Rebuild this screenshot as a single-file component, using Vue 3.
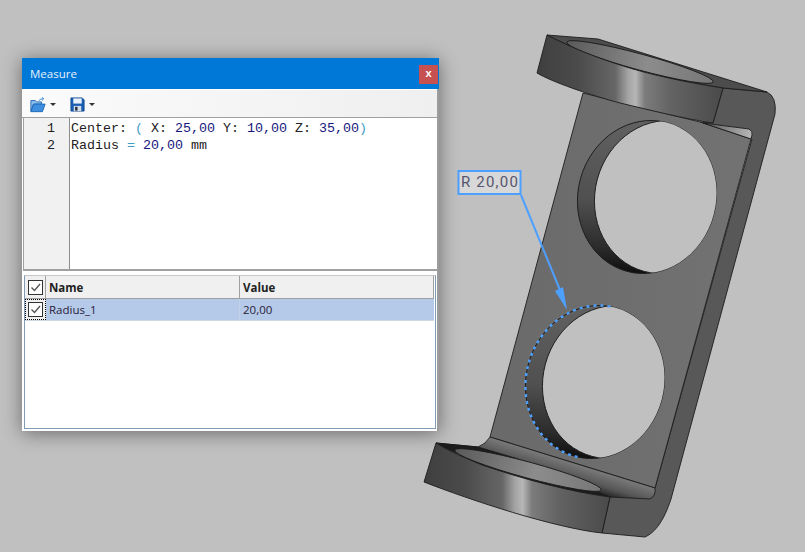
<script setup>
const codeLines = [
  [['Center:', 'plain'], [' ', 'plain'], ['(', 'op'], [' X: ', 'plain'], ['25,00', 'num'], [' Y: ', 'plain'], ['10,00', 'num'], [' Z: ', 'plain'], ['35,00', 'num'], [')', 'op']],
  [['Radius', 'plain'], [' ', 'plain'], ['=', 'op'], [' ', 'plain'], ['20,00', 'num'], [' mm', 'plain']]
]

const measures = [{ name: 'Radius_1', value: '20,00' }]

// the two holes are the same shape, moved along the plate
const holes = [
  { id: 'upper', dx: 52, dy: -185 },
  { id: 'lower', dx: 0, dy: 0 }
]
</script>

<template>
  <div class="desktop">
    <svg class="scene" width="805" height="552" viewBox="0 0 805 552">
      <defs>
        <linearGradient id="ringSide" gradientUnits="objectBoundingBox" x1="0" y1="0" x2="1" y2="0">
          <stop offset="0" stop-color="#3f3f3f" />
          <stop offset="0.22" stop-color="#4b4b4b" />
          <stop offset="0.42" stop-color="#666" />
          <stop offset="0.49" stop-color="#a4a4a4" />
          <stop offset="0.53" stop-color="#b6b6b6" />
          <stop offset="0.58" stop-color="#7c7c7c" />
          <stop offset="0.72" stop-color="#636363" />
          <stop offset="1" stop-color="#4a4a4a" />
        </linearGradient>
        <linearGradient id="plate" gradientUnits="userSpaceOnUse" x1="500" y1="300" x2="740" y2="300">
          <stop offset="0" stop-color="#6a6a6a" />
          <stop offset="1" stop-color="#727272" />
        </linearGradient>
        <linearGradient id="band" gradientUnits="userSpaceOnUse" x1="570" y1="462" x2="561" y2="491">
          <stop offset="0" stop-color="#7a7a7a" />
          <stop offset="0.45" stop-color="#555" />
          <stop offset="0.85" stop-color="#0c0c0c" />
          <stop offset="1" stop-color="#000" />
        </linearGradient>
        <linearGradient id="wall" gradientUnits="objectBoundingBox" x1="0.3" y1="0" x2="0.5" y2="1">
          <stop offset="0" stop-color="#626262" />
          <stop offset="0.55" stop-color="#505050" />
          <stop offset="0.85" stop-color="#2c2c2c" />
          <stop offset="1" stop-color="#111" />
        </linearGradient>
        <linearGradient id="bore" gradientUnits="objectBoundingBox" x1="0" y1="0" x2="1" y2="0">
          <stop offset="0" stop-color="#5a5a5a" />
          <stop offset="0.55" stop-color="#8c8c8c" />
          <stop offset="1" stop-color="#777" />
        </linearGradient>
        <linearGradient id="wedge" gradientUnits="userSpaceOnUse" x1="705" y1="125" x2="752" y2="135">
          <stop offset="0" stop-color="#5c5c5c" />
          <stop offset="1" stop-color="#b8b8b8" />
        </linearGradient>
        <clipPath id="frontUpper"><ellipse cx="647" cy="197" rx="69" ry="77" transform="rotate(15 647 197)" /></clipPath>
        <clipPath id="frontLower"><ellipse cx="595" cy="382" rx="69" ry="77" transform="rotate(15 595 382)" /></clipPath>
        <clipPath id="leftArc"><polygon points="612,298 500,298 500,470 578,470 578,445 530,380 612,315" /></clipPath>
      </defs>

      <!-- side face with the big fillet -->
      <path class="edge" fill="#585858"
        d="M723 88 L767 92 Q777 97 775 114 L671 499 C664 520 656 532 645 537 L602 533 L610 497 L655 488 L752 139 L700 122 L713 123 Z" />

      <!-- front plate -->
      <path class="edge" fill="url(#plate)" d="M583 93 L700 122 L751 139 L655 488 L490 437 Z" />
      <path class="edge" fill="url(#wedge)" d="M703 123 L749 129 Q753 131 752 135 L751 139 Z" />

      <!-- holes -->
      <g v-for="hole in holes" :key="hole.id">
        <ellipse class="edge" fill="url(#wall)"
          :cx="595 + hole.dx" :cy="382 + hole.dy" rx="69" ry="77"
          :transform="`rotate(15 ${595 + hole.dx} ${382 + hole.dy})`" />
        <g :clip-path="hole.id === 'upper' ? 'url(#frontUpper)' : 'url(#frontLower)'">
          <ellipse class="edge" fill="#c0c0c0"
            :cx="612 + hole.dx" :cy="382 + hole.dy" rx="69" ry="77"
            :transform="`rotate(15 ${612 + hole.dx} ${382 + hole.dy})`" />
        </g>
      </g>

      <!-- selected circle -->
      <g clip-path="url(#leftArc)">
        <ellipse cx="595" cy="382" rx="69" ry="77" transform="rotate(15 595 382)"
          fill="none" stroke="#4da0ff" stroke-width="2.4" stroke-dasharray="3 4" />
      </g>

      <!-- fillet band above the lower ring -->
      <path class="edge" fill="url(#band)"
        d="M490 437 L655 488 Q656 496 650 499 L610 497 L436 443 L478 447 Q486 444 490 437 Z" />

      <!-- lower ring -->
      <path class="edge" fill="#1c1c1c"
        d="M436 443 L478 447 L515 458 L610 497 L548 487 L482 465 L445 448 Z" />
      <ellipse class="edge" cx="528" cy="470" rx="76" ry="8" transform="rotate(15.2 528 470)" fill="url(#bore)" />
      <path class="edge" fill="url(#ringSide)"
        d="M436 443 L424 482 C470 500 555 528 602 533 L610 497 C570 492 520 478 482 465 C465 458 450 452 436 443 Z" />

      <!-- upper ring -->
      <path class="edge" fill="#4c4c4c"
        d="M547 35 L598 39 L767 92 L723 88 C690 83 650 75 620 65 C595 57 570 47 547 35 Z" />
      <ellipse class="edge" cx="640" cy="62" rx="76" ry="8" transform="rotate(15.2 640 62)" fill="url(#bore)" />
      <path class="edge" fill="url(#ringSide)"
        d="M547 35 L537 73 C552 82 590 95 620 103 C650 110 685 119 713 123 L723 88 C690 83 650 75 620 65 C595 57 570 47 547 35 Z" />

      <!-- dimension leader -->
      <line x1="521" y1="195" x2="562" y2="295" stroke="#4da0ff" stroke-width="2" />
      <polygon points="567,310 555,291 563,287" fill="#4da0ff" />
      <rect x="458.5" y="171" width="62" height="23" fill="#d8d8d8" stroke="#4da0ff" stroke-width="2" />
      <text class="dim-text" x="461" y="187">R 20,00</text>
    </svg>

    <div class="window">
      <div class="titlebar">
        <span class="title">Measure</span>
        <button class="close">x</button>
      </div>

      <div class="body">
        <div class="toolbar">
          <div class="tool">
            <svg width="16" height="16" viewBox="0 0 18 18">
              <path d="M1 4 H6 L7.5 5.5 H13 V8 H4 L1 16 Z" fill="#8fc0ec" stroke="#1b63b5" stroke-width="1" />
              <path d="M4 8 H17 L14 16.5 H1 Z" fill="#3f8fdf" stroke="#1b63b5" stroke-width="1" />
              <path d="M10 4 Q12 1.5 15 2 M13.5 0.5 L15.5 2 L13.5 3.8" fill="none" stroke="#3a8ed8" stroke-width="1.1" />
            </svg>
            <span class="caret"></span>
          </div>
          <div class="tool">
            <svg width="15" height="15" viewBox="0 0 16 16">
              <path d="M1 1 H13 L15 3 V15 H1 Z" fill="#1a5fb4" stroke="#134b92" stroke-width="1" />
              <rect x="3.5" y="1.5" width="9" height="5.5" fill="#e9f1fa" />
              <rect x="4" y="9.5" width="8" height="5.5" fill="#d6dde6" />
              <rect x="5.5" y="10.5" width="2.5" height="4" fill="#1d2a3a" />
            </svg>
            <span class="caret"></span>
          </div>
        </div>

        <div class="editor">
          <div class="gutter">
            <div v-for="(line, i) in codeLines" :key="i" class="line-no">{{ i + 1 }}</div>
          </div>
          <div class="code">
            <div v-for="(line, i) in codeLines" :key="i" class="code-line">
              <span v-for="(part, j) in line" :key="j" :class="part[1]">{{ part[0] }}</span>
            </div>
          </div>
        </div>

        <div class="table">
          <div class="row head">
            <div class="cell check">
              <span class="box">
                <svg width="11" height="11" viewBox="0 0 11 11"><path d="M1.5 5.5 L4.5 8.5 L10 2" fill="none" stroke="#555" stroke-width="1.4" /></svg>
              </span>
            </div>
            <div class="cell name">Name</div>
            <div class="cell value">Value</div>
          </div>
          <div v-for="m in measures" :key="m.name" class="row selected">
            <div class="cell check focused">
              <span class="box">
                <svg width="11" height="11" viewBox="0 0 11 11"><path d="M1.5 5.5 L4.5 8.5 L10 2" fill="none" stroke="#555" stroke-width="1.4" /></svg>
              </span>
            </div>
            <div class="cell name">{{ m.name }}</div>
            <div class="cell value">{{ m.value }}</div>
          </div>
        </div>
      </div>
    </div>
  </div>
</template>

<style scoped>
.desktop {
  position: relative;
  width: 805px;
  height: 552px;
  background: #c0c0c0;
  overflow: hidden;
  font-family: "Open Sans", "Liberation Sans", sans-serif;
}

.scene {
  position: absolute;
  left: 0;
  top: 0;
}

.edge {
  stroke: #1d1d1d;
  stroke-width: 0.9;
  stroke-linejoin: round;
}

.dim-text {
  font-family: Roboto, sans-serif;
  font-size: 15px;
  font-weight: 400;
  letter-spacing: 1.2px;
  fill: #55556e;
}

/* floating tool window */
.window {
  position: absolute;
  left: 22px;
  top: 58px;
  width: 417px;
  height: 373px;
  box-sizing: border-box;
  display: flex;
  flex-direction: column;
  background: #9c9c9c;
  box-shadow: 0 2px 18px rgba(0, 0, 0, 0.45);
}

.titlebar {
  height: 31px;
  flex: none;
  display: flex;
  align-items: center;
  justify-content: space-between;
  padding: 0 1px 0 8px;
  background: #0078d7;
}

.title {
  color: #e8f2fb;
  font-size: 11.5px;
  margin-top: -1px;
}

.close {
  width: 19px;
  height: 19px;
  margin-top: 1px;
  padding: 0;
  border: none;
  background: #c75050;
  color: #fff;
  font: bold 11px "Liberation Mono", monospace;
}

.body {
  flex: 1;
  min-height: 0;
  margin-right: 2px;
  display: flex;
  flex-direction: column;
  background: #fff;
}

.toolbar {
  height: 28px;
  flex: none;
  margin-top: 1px;
  display: flex;
  align-items: center;
  gap: 14px;
  padding: 2px 0 0 8px;
  background: linear-gradient(90deg, #fbfbfb, #efefef);
  border-bottom: 1px solid #a0a0a0;
  box-sizing: border-box;
}

.tool {
  display: flex;
  align-items: center;
  gap: 4px;
}

.caret {
  width: 0;
  height: 0;
  border-left: 3.5px solid transparent;
  border-right: 3.5px solid transparent;
  border-top: 3.5px solid #333;
}

.editor {
  height: 153px;
  flex: none;
  margin: 0 0 0 1px;
  display: flex;
  box-sizing: border-box;
  border-bottom: 2px solid #a0a0a0;
  border-left: 1px solid #a0a0a0;
  font-family: "Liberation Mono", "Courier New", monospace;
  font-size: 13.33px;
  line-height: 17px;
  color: #222;
}

.gutter {
  width: 46px;
  flex: none;
  padding: 2px 14px 0 0;
  box-sizing: border-box;
  background: #f1f1f1;
  border-right: 1px solid #8c8c8c;
  text-align: right;
}

.code {
  flex: 1;
  padding: 2px 0 0 1px;
  white-space: pre;
}

.num {
  color: #16167c;
}

.op {
  color: #3f9fc4;
}

.table {
  margin: 4px 1px 2px 2px;
  flex: 1;
  border: 1px solid #7f9db9;
  border-top-color: #c8c8c8;
  font-size: 11.5px;
  color: #222;
}

.row {
  display: grid;
  grid-template-columns: 21px 194px 1fr;
  height: 22px;
  margin-right: 1px;
}

.head {
  height: 23px;
  background: #f0f0f0;
  font-weight: 700;
  border-bottom: 1px solid #a0a0a0;
  box-sizing: border-box;
  border-right: 1px solid #a0a0a0;
}

.cell {
  display: flex;
  align-items: center;
  padding-left: 3px;
  box-sizing: border-box;
  min-width: 0;
}

.head .cell {
  border-right: 1px solid #a0a0a0;
}

.head .cell:last-child {
  border-right: none;
}

.selected {
  background: #b4cae8;
  border-bottom: 1px solid #d0d8e4;
  box-sizing: border-box;
  color: #2a1a3a;
}

.selected .name {
  border-right: 1px solid #c2d2ea;
}

.check {
  justify-content: center;
  padding: 0;
}

.focused {
  background: #f0f0f0;
  outline: 1px dotted #000;
  outline-offset: -1px;
}

.box {
  width: 13px;
  height: 13px;
  display: flex;
  align-items: center;
  justify-content: center;
  background: #fff;
  border: 1px solid #333;
}
</style>

<style>
html, body {
  margin: 0;
  background: #c0c0c0;
}
</style>
